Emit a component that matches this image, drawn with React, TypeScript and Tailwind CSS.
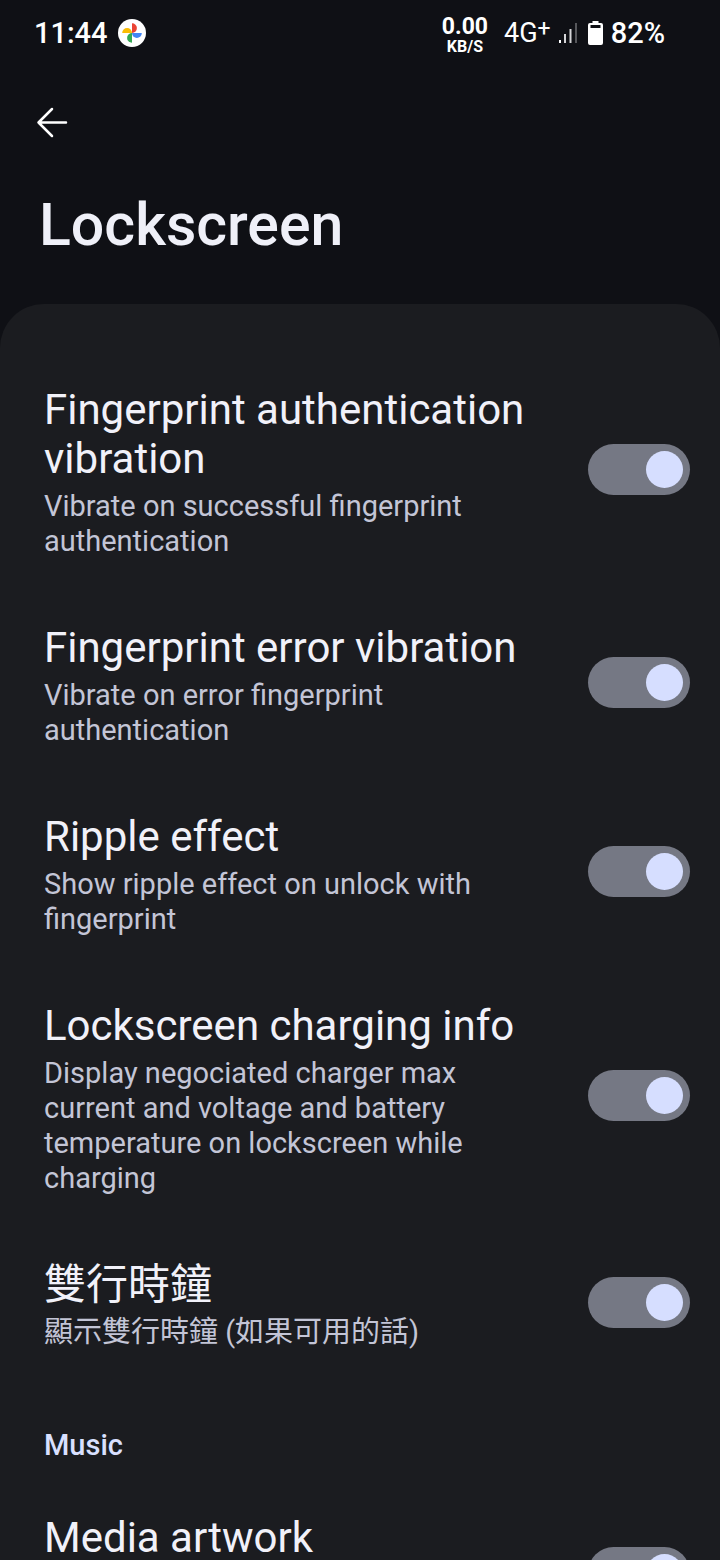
type Setting = { id: string; title: string; summary?: string; tall?: boolean };

const general: Setting[] = [
  {
    id: 'fp-success',
    title: 'Fingerprint authentication vibration',
    summary: 'Vibrate on successful fingerprint authentication',
  },
  {
    id: 'fp-error',
    title: 'Fingerprint error vibration',
    summary: 'Vibrate on error fingerprint authentication',
  },
  {
    id: 'ripple',
    title: 'Ripple effect',
    summary: 'Show ripple effect on unlock with fingerprint',
  },
  {
    id: 'charging',
    title: 'Lockscreen charging info',
    summary:
      'Display negociated charger max current and voltage and battery temperature on lockscreen while charging',
  },
  { id: 'clock', title: '雙行時鐘', summary: '顯示雙行時鐘 (如果可用的話)' },
];

const music: Setting[] = [{ id: 'artwork', title: 'Media artwork', tall: true }];

function SettingRow({ id, title, summary, tall }: Setting) {
  return (
    <li className={tall ? 'flex min-h-[189px] items-center gap-12 pl-11 pr-[30px]' : 'flex items-center gap-12 pl-11 pr-[30px]'}>
      <label htmlFor={id} className="flex min-w-0 flex-1 flex-col gap-[6px] self-start pt-[35px] pb-[29px]">
        <span className="text-[42px] leading-[49px] text-[#f1f1f9]">{title}</span>
        {summary && <span className="text-[29px] leading-[35px] text-[#c3c5d6]">{summary}</span>}
      </label>
      <input
        id={id}
        type="checkbox"
        role="switch"
        defaultChecked
        className="flex h-[51px] w-[102px] shrink-0 appearance-none items-center rounded-full bg-[#757884] px-[7px] before:size-[37px] before:rounded-full before:bg-[#d6deff] before:content-[''] checked:justify-end"
      />
    </li>
  );
}

function PhotosIcon() {
  return (
    <svg viewBox="0 0 28 28" className="size-7" aria-hidden="true">
      <circle cx="14" cy="14" r="14" fill="#fff" />
      <path d="M14 14V4.2a4.9 4.9 0 0 1 0 9.8z" fill="#ea4335" />
      <path d="M14 14h9.8a4.9 4.9 0 0 1-9.8 0z" fill="#4285f4" />
      <path d="M14 14v9.8a4.9 4.9 0 0 1 0-9.8z" fill="#34a853" />
      <path d="M14 14H4.2a4.9 4.9 0 0 1 9.8 0z" fill="#fbbc04" />
    </svg>
  );
}

function SignalIcon() {
  return (
    <svg viewBox="0 0 20 22" className="h-[22px] w-5" aria-hidden="true">
      <rect x="1" y="18" width="2" height="3" fill="#fff" />
      <rect x="6" y="12" width="2" height="9" fill="#d5d5d8" />
      <rect x="11.5" y="7" width="2" height="14" fill="#d5d5d8" />
      <rect x="17" y="1" width="2" height="20" fill="#56575b" />
    </svg>
  );
}

function BatteryIcon() {
  return (
    <svg viewBox="0 0 15 24" className="h-6 w-[15px]" aria-hidden="true">
      <path
        fillRule="evenodd"
        fill="#fff"
        d="M4.500 0h6v2H13a2 2 0 0 1 2 2v18a2 2 0 0 1-2 2H2a2 2 0 0 1-2-2V4a2 2 0 0 1 2-2h2.500zM2.500 4v3h10V4z"
      />
    </svg>
  );
}

export default function App() {
  return (
    <div className="flex h-screen flex-col overflow-hidden bg-[#0f1015] font-['Roboto','Noto_Sans_CJK_TC',sans-serif]">
      <div className="flex h-[66px] shrink-0 items-center justify-between pl-[34px] pr-[55px] text-white">
        <div className="flex items-center gap-[10px]">
          <span className="text-[29px] leading-[35px] font-medium">11:44</span>
          <PhotosIcon />
        </div>
        <div className="flex items-center">
          <div className="mr-4 flex flex-col items-center pt-1 font-bold">
            <span className="text-[23px] leading-6">0.00</span>
            <span className="text-[16px] leading-4">KB/S</span>
          </div>
          <span className="mr-[7px] flex items-start text-[27px] leading-8">
            4G<span className="text-[23px] leading-6">+</span>
          </span>
          <SignalIcon />
          <span className="ml-[10px] mr-2">
            <BatteryIcon />
          </span>
          <span className="text-[29px] leading-[35px] font-medium">82%</span>
        </div>
      </div>

      <header className="flex shrink-0 flex-col px-9 pt-10 pb-11">
        <button type="button" aria-label="Back" className="size-8">
          <svg viewBox="0 0 32 32" className="size-8" fill="none" stroke="#fff" strokeWidth="2.500" strokeLinecap="round" strokeLinejoin="round" aria-hidden="true">
            <path d="M30 16.500H2.500M16 3L2.500 16.500L16 30" />
          </svg>
        </button>
        <h1 className="mt-[52px] pl-[3px] text-[59px] leading-[70px] font-medium text-[#eff0f8]">Lockscreen</h1>
      </header>

      <main className="min-h-0 flex-1 overflow-y-auto rounded-t-[44px] bg-[#1b1c20] pt-[46px] [scrollbar-width:none]">
        <ul>
          {general.map((s) => (
            <SettingRow key={s.id} {...s} />
          ))}
        </ul>
        <h2 className="px-11 pt-[49px] pb-[15px] text-[29px] leading-[35px] font-medium text-[#d9e0ff]">Music</h2>
        <ul>
          {music.map((s) => (
            <SettingRow key={s.id} {...s} />
          ))}
        </ul>
      </main>
    </div>
  );
}
